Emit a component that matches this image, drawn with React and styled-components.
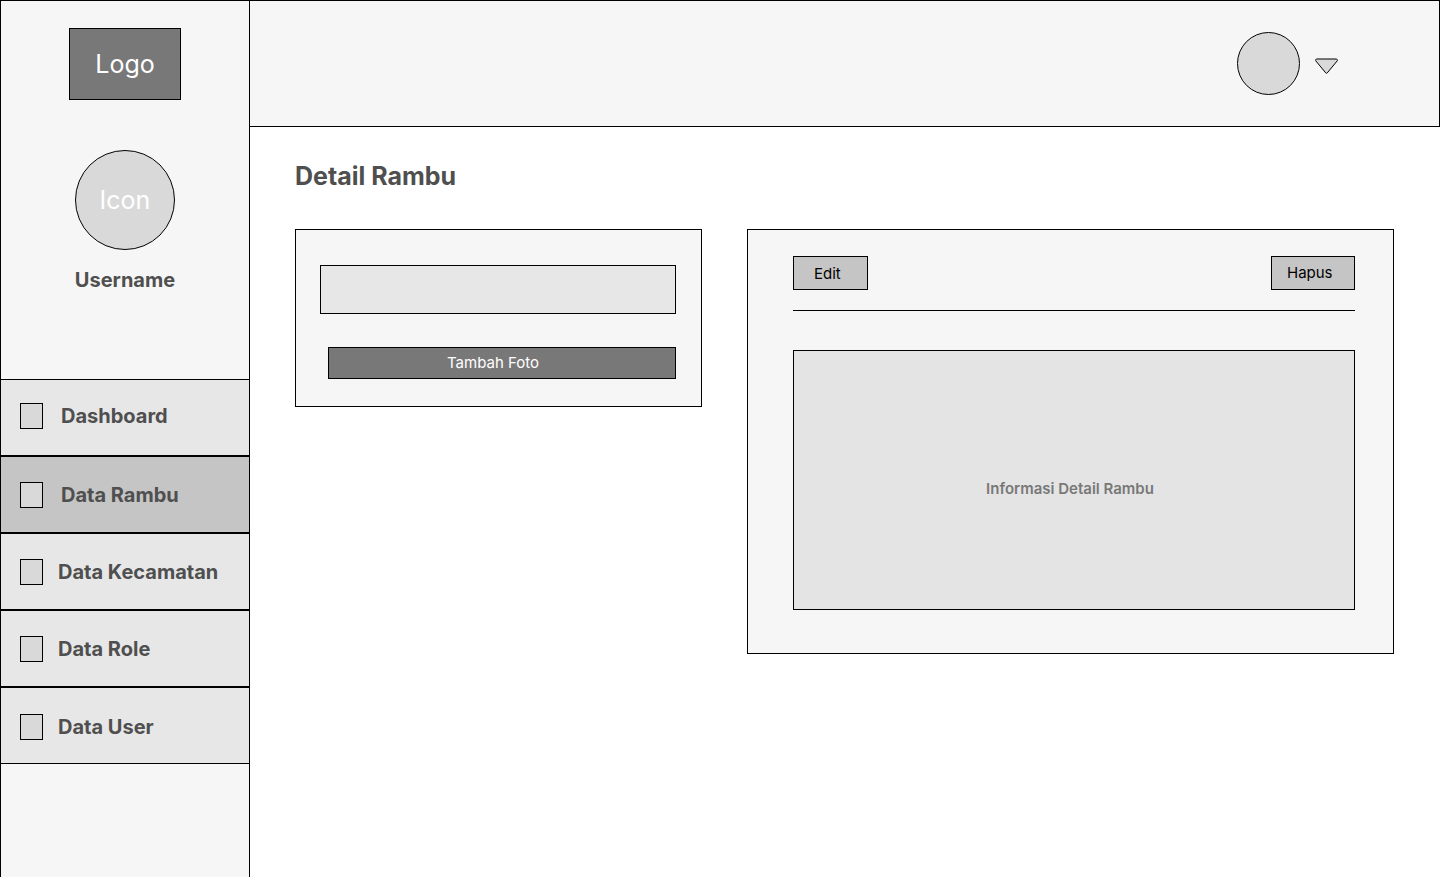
import React from "react";
import styled, { createGlobalStyle } from "styled-components";

const Global = createGlobalStyle`
  * { box-sizing: border-box; }
  body { margin: 0; background: #fff; font-family: Inter, sans-serif; overflow: hidden; }
`;

const Page = styled.div`
  display: flex;
  width: 1440px;
  height: 877px;
  overflow: hidden;
`;

const Sidebar = styled.aside`
  flex: 0 0 250px;
  min-width: 0;
  height: 878px;
  display: flex;
  flex-direction: column;
  align-items: center;
  background: #f6f6f6;
  border: 1px solid #000;
  padding-top: 27px;
`;

const Logo = styled.div`
  width: 112px;
  height: 72px;
  display: flex;
  align-items: center;
  justify-content: center;
  background: #787878;
  border: 1px solid #000;
  color: #fff;
  font-size: 25px;
  line-height: 30px;
`;

const ProfileIcon = styled.div`
  width: 100px;
  height: 100px;
  margin-top: 50px;
  display: flex;
  align-items: center;
  justify-content: center;
  background: #d9d9d9;
  border: 1px solid #000;
  border-radius: 50%;
  color: #fff;
  font-size: 25px;
  line-height: 30px;
`;

const Username = styled.div`
  margin-top: 18px;
  height: 24px;
  color: #4f4f4f;
  font-size: 20px;
  font-weight: 700;
  line-height: 24px;
`;

const Menu = styled.nav`
  width: 100%;
  margin-top: 87px;
`;

const MenuItem = styled.a`
  display: flex;
  align-items: flex-start;
  height: 77px;
  padding: ${(p) => p.$top}px 0 0 19px;
  background: ${(p) => (p.$active ? "#c5c5c5" : "#e7e7e7")};
  border: solid #000;
  border-width: 1px 0;
  color: #4f4f4f;
  font-size: 20px;
  font-weight: 700;
  line-height: 26px;
  white-space: nowrap;
`;

const MenuIcon = styled.span`
  width: 23px;
  height: 26px;
  margin-right: ${(p) => p.$gap}px;
  background: #d9d9d9;
  border: 1px solid #000;
`;

const Main = styled.div`
  flex: 1;
  min-width: 0;
`;

const TopBar = styled.header`
  height: 127px;
  display: flex;
  align-items: center;
  justify-content: flex-end;
  gap: 15px;
  padding-right: 101px;
  background: #f6f6f6;
  border: 1px solid #000;
  border-left: 0;
`;

const Avatar = styled.div`
  width: 63px;
  height: 63px;
  background: #d9d9d9;
  border: 1px solid #000;
  border-radius: 50%;
`;

const Caret = styled.svg`
  display: block;
  width: 23px;
  height: 17px;
  margin-top: 6px;
`;

const Content = styled.main`
  padding: 34px 46px 0 45px;
`;

const Title = styled.h1`
  margin: 0;
  color: #4f4f4f;
  font-size: 25px;
  font-weight: 700;
  line-height: 30px;
`;

const Columns = styled.div`
  display: flex;
  align-items: flex-start;
  gap: 45px;
  margin-top: 38px;
`;

const Panel = styled.section`
  flex: none;
  width: ${(p) => p.$width}px;
  height: ${(p) => p.$height}px;
  padding: ${(p) => p.$padding};
  background: #f6f6f6;
  border: 1px solid #000;
`;

const PhotoField = styled.div`
  height: 49px;
  background: #e7e7e7;
  border: 1px solid #000;
`;

const Button = styled.button`
  display: block;
  font: 400 15px/18px Inter, sans-serif;
  border: 1px solid #000;
  text-align: left;
`;

const AddPhotoButton = styled(Button)`
  width: 348px;
  height: 32px;
  margin: 33px 0 0 8px;
  padding: 0 0 0 118px;
  background: #787878;
  color: #fff;
`;

const ActionButton = styled(Button)`
  width: ${(p) => p.$width}px;
  height: 34px;
  padding: ${(p) => p.$padding};
  background: #c5c5c5;
  color: #000;
`;

const Actions = styled.div`
  display: flex;
  justify-content: space-between;
  height: 55px;
  border-bottom: 1px solid #000;
`;

const Information = styled.div`
  display: flex;
  align-items: center;
  justify-content: center;
  height: 260px;
  margin-top: 39px;
  padding: 18px 8px 0 0;
  background: #e4e4e4;
  border: 1px solid #000;
  color: #787878;
  font-size: 15px;
  font-weight: 600;
  line-height: 18px;
`;

const menuItems = [
  { label: "Dashboard", top: 23, gap: 18 },
  { label: "Data Rambu", top: 25, gap: 18, active: true },
  { label: "Data Kecamatan", top: 25, gap: 15 },
  { label: "Data Role", top: 25, gap: 15 },
  { label: "Data User", top: 26, gap: 15 },
];

export default function App() {
  return (
    <>
      <Global />
      <Page>
        <Sidebar>
          <Logo>Logo</Logo>
          <ProfileIcon>Icon</ProfileIcon>
          <Username>Username</Username>
          <Menu>
            {menuItems.map((item) => (
              <MenuItem key={item.label} $top={item.top} $active={item.active}>
                <MenuIcon $gap={item.gap} />
                {item.label}
              </MenuItem>
            ))}
          </Menu>
        </Sidebar>
        <Main>
          <TopBar>
            <Avatar />
            <Caret viewBox="0 0 23 17">
              <path
                d="M12.25 14.9a1 1 0 0 1-1.5 0L.9 3A1.2 1.2 0 0 1 1.8 1H21.2a1.2 1.2 0 0 1 .9 2Z"
                fill="#d9d9d9"
                stroke="#000"
              />
            </Caret>
          </TopBar>
          <Content>
            <Title>Detail Rambu</Title>
            <Columns>
              <Panel $width={407} $height={178} $padding="35px 25px 0 24px">
                <PhotoField />
                <AddPhotoButton>Tambah Foto</AddPhotoButton>
              </Panel>
              <Panel $width={647} $height={425} $padding="26px 38px 0 45px">
                <Actions>
                  <ActionButton $width={75} $padding="2px 0 0 20px">Edit</ActionButton>
                  <ActionButton $width={84} $padding="0 0 0 15px">Hapus</ActionButton>
                </Actions>
                <Information>Informasi Detail Rambu</Information>
              </Panel>
            </Columns>
          </Content>
        </Main>
      </Page>
    </>
  );
}
